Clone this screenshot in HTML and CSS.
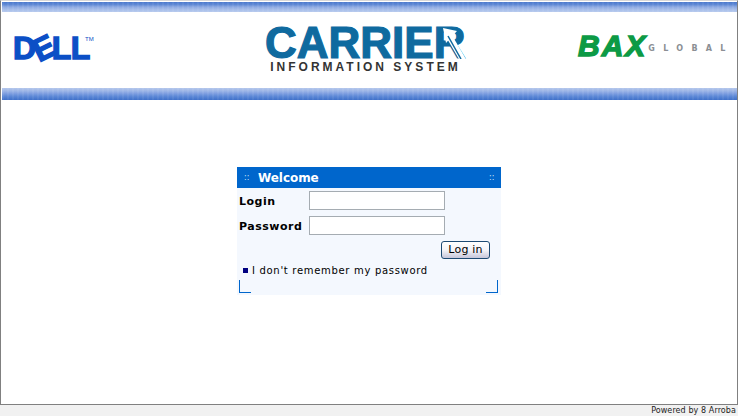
FILE: index.html
```html
<!DOCTYPE html>
<html lang="en">
<head>
<meta charset="utf-8">
<title>Carrier Information System</title>
<link rel="stylesheet" href="styles.css">
</head>
<body>
<div class="frame">
  <div class="band band-top"></div>
  <header class="logos">
    <div class="dell"><span>D</span><span class="dell-e">E</span><span>LL</span><sup class="tm">TM</sup></div>
    <div class="carrier">
      <div class="carrier-name">CARRIER<svg class="arrow" viewBox="0 0 30 32" aria-hidden="true"><path d="M7 1 L21 4 L10 16 Z" fill="#fff"/><path d="M13 9 L27 33" stroke="#fff" stroke-width="6" fill="none"/><path d="M12 9 L25 32" stroke="#0f6a9f" stroke-width="1.5" fill="none"/></svg></div>
      <div class="carrier-sub">INFORMATION SYSTEM</div>
    </div>
    <div class="bax"><span class="bax-name">BAX</span><span class="bax-sub">GLOBAL</span></div>
  </header>
  <div class="band band-bottom"></div>
  <main class="content">
    <section class="panel">
      <div class="panel-head">
        <span class="dots">::</span>
        <span class="panel-title">Welcome</span>
        <span class="dots">::</span>
      </div>
      <form class="panel-body">
        <div class="row"><label class="lbl" for="login">Login</label><input class="field" id="login" type="text"></div>
        <div class="row"><label class="lbl" for="password">Password</label><input class="field" id="password" type="password"></div>
        <div class="actions"><button class="btn" type="button">Log in</button></div>
        <div class="forgot"><span class="bullet"></span><span>I don't remember my password</span></div>
        <div class="corners"><span class="corner corner-l"></span><span class="corner corner-r"></span></div>
      </form>
    </section>
  </main>
</div>
<footer class="foot">Powered by 8 Arroba</footer>
</body>
</html>
```
FILE: styles.css
```css
* { box-sizing: border-box; }
html, body { margin: 0; height: 100%; }
body {
  width: 738px;
  height: 416px;
  overflow: hidden;
  display: flex;
  flex-direction: column;
  background: #f1f1f1;
  font-family: "DejaVu Sans", Verdana, sans-serif;
}
.frame {
  height: 406px;
  background: #fff;
  border-left: 1px solid #808080;
  border-right: 1px solid #808080;
  border-bottom: 1px solid #808080;
  border-top: 1px solid #d8d8d8;
  padding-top: 1px;
  display: flex;
  flex-direction: column;
}
.band {
  margin-left: 1px;
  background-color: #7d9edd;
}
.band-top {
  height: 10px;
  background-image:
    repeating-linear-gradient(90deg, rgba(255,255,255,.06) 0 2px, rgba(255,255,255,0) 2px 5px),
    linear-gradient(180deg, #4a78cc 0, #5e88d4 25%, #8eaae2 50%, #a6bde9 75%, #b7caee 100%);
}
.band-bottom {
  height: 12px;
  background-image:
    repeating-linear-gradient(90deg, rgba(255,255,255,.06) 0 2px, rgba(255,255,255,0) 2px 5px),
    linear-gradient(0deg, #3f70c9 0, #5b87d6 30%, #7f9fe0 55%, #9bb4e6 75%, #b4c7ec 100%);
}
.logos {
  height: 76px;
  display: flex;
  align-items: flex-start;
  padding: 0 9px 0 12px;
}
.dell {
  margin-top: 20px;
  width: 252px;
  display: flex;
  color: #0b4fc6;
  font: 700 32px/32px "Liberation Sans", Arial, sans-serif;
  -webkit-text-stroke: 1.4px #0b4fc6;
  letter-spacing: -.4px;
}
.dell-e { display: inline-block; transform: rotate(-26deg); margin: 0 -2px 0 -3px; }
.tm { font-size: 6px; line-height: 8px; letter-spacing: 0; font-weight: 400; margin: 3px 0 0 -5px; -webkit-text-stroke: 0; }
.carrier { margin-top: 13px; width: 201px; text-align: center; }
.carrier-name {
  position: relative;
  color: #0f6a9f;
  font: 700 44px/36px "Liberation Sans", Arial, sans-serif;
  -webkit-text-stroke: 1.2px #0f6a9f;
  white-space: nowrap;
  letter-spacing: 0;
  text-align: left;
}
.arrow { position: absolute; right: 0; top: 2px; width: 30px; height: 32px; }
.carrier-sub {
  color: #333;
  font: 700 12px/12px "Liberation Sans", Arial, sans-serif;
  letter-spacing: 3px;
  white-space: nowrap;
}
.bax { margin-top: 21px; margin-left: auto; width: 150px; display: flex; align-items: center; gap: 1px; }
.bax-name {
  color: #0c9a45;
  font: italic 700 30px/26px "Liberation Sans", Arial, sans-serif;
  -webkit-text-stroke: 1.4px #0c9a45;
  letter-spacing: 2px;
}
.bax-sub {
  color: #8b8f94;
  font: 700 8px/10px "DejaVu Sans", sans-serif;
  letter-spacing: 8.3px;
  margin-top: 5px;
  margin-right: -8px;
}
.content { flex: 1; padding: 67px 0 0 236px; }
.panel { width: 264px; }
.panel-head {
  height: 21px;
  background: #0066cc;
  color: #fff;
  display: flex;
  align-items: center;
  padding: 0 4px 0 7px;
}
.dots { font-size: 8px; line-height: 10px; color: #cfe2f8; width: 8px; }
.panel-title {
  flex: 1;
  margin-left: 6px;
  font-size: 12px;
  font-weight: 700;
  letter-spacing: -.05px;
}
.panel-body { display: block; height: 107px; background: #f4f8fe; padding: 3px 0 0 2px; }
.row { display: flex; align-items: center; height: 19px; margin-bottom: 6px; }
.lbl { width: 70px; padding-top: 1px; font-size: 11px; font-weight: 700; letter-spacing: .52px; color: #000; }
.field {
  width: 136px;
  height: 19px;
  padding: 0;
  background: #fff;
  border: 1px solid #a5acb2;
  border-radius: 0;
}
.actions { display: flex; justify-content: flex-end; padding-right: 11px; }
.btn {
  width: 49px;
  height: 18px;
  padding: 0;
  font: 11px/14px "DejaVu Sans", sans-serif;
  letter-spacing: .2px;
  color: #000;
  border: 1px solid #1d4a73;
  border-radius: 3px;
  background: linear-gradient(180deg, #fff 0, #f4f4f8 50%, #c6c6da 100%);
}
.forgot {
  display: flex;
  align-items: center;
  gap: 4px;
  margin-top: 3px;
  height: 16px;
  padding-left: 4px;
  font-size: 10px;
  letter-spacing: .69px;
  color: #000;
}
.bullet { width: 5px; height: 5px; background: #000080; margin-top: 1px; }
.corners { display: flex; justify-content: space-between; margin-top: 2px; width: 259px; }
.corner { width: 12px; height: 13px; border-bottom: 1px solid #0066cc; }
.corner-l { border-left: 1px solid #0066cc; }
.corner-r { border-right: 1px solid #0066cc; }
.foot {
  flex: 1;
  text-align: right;
  padding-right: 2px;
  font: 8px/11px "DejaVu Sans", sans-serif;
  letter-spacing: .09px;
  color: #222;
}
```
